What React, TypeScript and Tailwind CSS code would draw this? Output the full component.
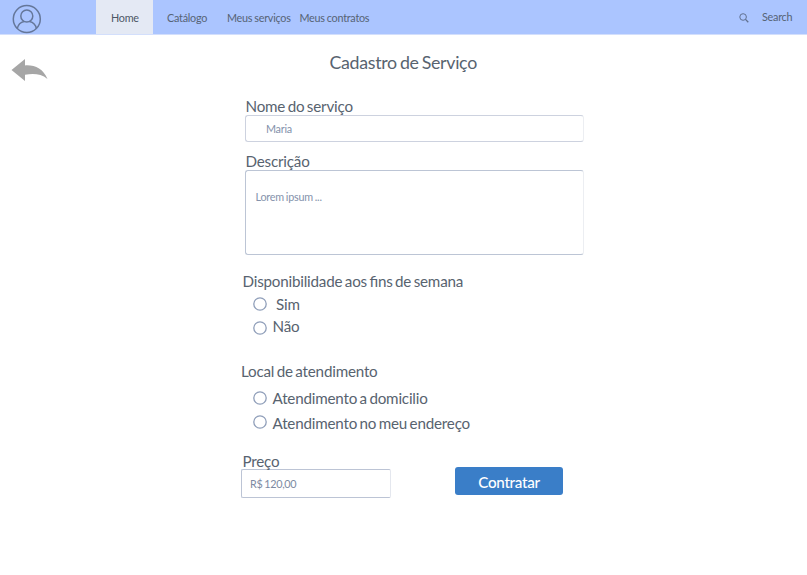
import React from "react";

function Label({ className, children }: { className: string; children: React.ReactNode }) {
  return <div className={`whitespace-nowrap text-[15.2px] leading-[18px] ${className}`}>{children}</div>;
}

function Radio({ rowClass, circleClass, textClass, text }: { rowClass: string; circleClass: string; textClass: string; text: string }) {
  return (
    <label className={`ml-[253px] flex items-start whitespace-nowrap text-[15.2px] leading-[18px] ${rowClass}`}>
      <svg className={`size-[14px] shrink-0 ${circleClass}`} viewBox="0 0 14 14" fill="none" stroke="#8f9eb9" strokeWidth="1.3">
        <circle cx="7" cy="7" r="6.2" />
      </svg>
      <span className={textClass}>{text}</span>
    </label>
  );
}

function Header() {
  return (
    <header className="flex h-[35px] border-b border-[#d3dffc] bg-[#abc5ff] text-[10.8px] leading-[35px] tracking-[-0.25px] text-[#566375] [word-spacing:-0.5px]">
      <svg className="ml-3 mt-1 size-[30px] shrink-0" viewBox="0 0 30 30" fill="none" stroke="#65779a" strokeWidth="1.5">
        <circle cx="14.8" cy="15" r="13.5" />
        <circle cx="14.8" cy="12" r="6" />
        <path d="M5.2 24.5C6.2 20.5 9 18 12 17.4M17.6 17.4C21 18.2 23.6 20.5 24.4 24.5" />
      </svg>
      <nav className="ml-[54px] flex whitespace-nowrap">
        <a className="h-[34px] w-[57px] bg-[#e4e9f4] pl-[15px] text-[#4c5665]">Home</a>
        <a className="w-[74px] pl-[14px]">Catálogo</a>
        <a className="w-[72.5px]">Meus serviços</a>
        <a>Meus contratos</a>
      </nav>
      <div className="ml-auto flex w-[68px]">
        <svg className="mt-[12.5px] size-[10px]" viewBox="0 0 10 10" fill="none" stroke="#60708f" strokeWidth="1">
          <circle cx="4.1" cy="4" r="3.3" />
          <path d="M6.5 6.4L9.3 9.2" strokeWidth="1.3" />
        </svg>
        <span className="ml-[13px] leading-[34px]">Search</span>
      </div>
    </header>
  );
}

export default function App() {
  return (
    <div className="h-[575px] w-[807px] overflow-hidden bg-white font-['Lato',sans-serif] tracking-[-0.2px] text-[#58636f] [font-feature-settings:'liga'] [word-spacing:-1.2px]">
      <Header />
      <div className="flex h-[62px]">
        <svg className="ml-[11px] mt-[23px] h-[24px] w-[37px] shrink-0" viewBox="0 0 37 24" fill="#a6a6a6">
          <path d="M.5 12L14 1V7.4C24 6.8 32 10.5 36.5 21C30 15.8 23 15.5 14 16.7V23Z" />
        </svg>
        <h1 className="ml-[281.5px] mt-[16px] whitespace-nowrap text-[17.8px] leading-[22px] tracking-[-0.3px]">Cadastro de Serviço</h1>
      </div>
      <Label className="ml-[245.5px]">Nome do serviço</Label>
      <div className="ml-[245px] h-[27px] w-[339px] rounded-[3px] border border-[#cdd2df] border-r-[#eceef2] pl-[20px] text-[10.8px] leading-[25px] tracking-[-0.25px] text-[#8492ab]">Maria</div>
      <Label className="ml-[245.5px] mt-[10px]">Descrição</Label>
      <div className="ml-[245px] h-[85px] w-[339px] rounded-[3px] border border-[#bcc5d5] border-r-[#eceef2] pl-[9.5px] pt-[18px] text-[10.8px] leading-[16px] tracking-[-0.25px] text-[#8492ab] [word-spacing:-0.5px]">Lorem ipsum ...</div>
      <Label className="ml-[242.5px] mt-[17px]">Disponibilidade aos fins de semana</Label>
      <Radio rowClass="mt-[5px] h-[22px]" circleClass="mt-[2px]" textClass="ml-[9px]" text="Sim" />
      <Radio rowClass="h-[23px]" circleClass="mt-[4px]" textClass="ml-[5.5px]" text="Não" />
      <Label className="ml-[241px] mt-[22px]">Local de atendimento</Label>
      <Radio rowClass="mt-[9px] h-[25px]" circleClass="mt-[2px]" textClass="ml-[5.5px]" text="Atendimento a domicilio" />
      <Radio rowClass="h-[25px]" circleClass="mt-[1px]" textClass="ml-[5.5px]" text="Atendimento no meu endereço" />
      <div className="ml-[241px] mt-[13px] flex">
        <div className="w-[150px]">
          <Label className="ml-[1.5px]">Preço</Label>
          <div className="-mt-px h-[29px] rounded-[2px] border border-[#bcc4d5] border-r-[#e4e7ee] pl-[8px] text-[10.8px] leading-[27px] tracking-[-0.32px] text-[#7d8aa2] [word-spacing:-0.5px]">R$ 120,00</div>
        </div>
        <button className="ml-[64px] mt-[15px] h-[28px] w-[108px] rounded-[3px] bg-[#3a7ec8] text-[15.2px] leading-[30px] font-medium tracking-[-0.3px] text-white">Contratar</button>
      </div>
    </div>
  );
}
